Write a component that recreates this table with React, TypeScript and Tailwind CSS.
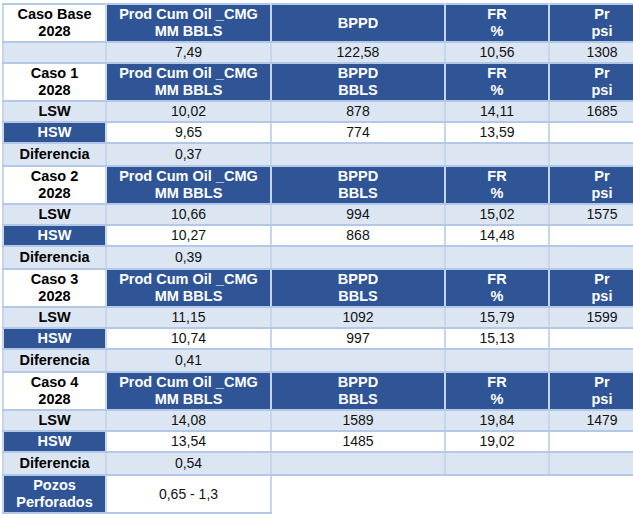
const blue = 'bg-[#2f5597] text-white font-bold'
const light = 'bg-[#dce6f2]'
const cell = 'border-2 border-y-[#b3c8e6] border-x-[#c6d6ec] text-center align-middle p-0 leading-[17px]'

type Caso = {
  name: string
  lsw: string[]
  hsw: string[]
  dif: string
}

const casos: Caso[] = [
  { name: 'Caso 1', lsw: ['10,02', '878', '14,11', '1685'], hsw: ['9,65', '774', '13,59', ''], dif: '0,37' },
  { name: 'Caso 2', lsw: ['10,66', '994', '15,02', '1575'], hsw: ['10,27', '868', '14,48', ''], dif: '0,39' },
  { name: 'Caso 3', lsw: ['11,15', '1092', '15,79', '1599'], hsw: ['10,74', '997', '15,13', ''], dif: '0,41' },
  { name: 'Caso 4', lsw: ['14,08', '1589', '19,84', '1479'], hsw: ['13,54', '1485', '19,02', ''], dif: '0,54' },
]

function HeaderRow({ name, bppd }: { name: string; bppd: string[] }) {
  return (
    <tr className="h-[38px]">
      <td className={`${cell} bg-white font-bold text-black text-[14.5px]`}>
        {name}
        <br />
        2028
      </td>
      <td className={`${cell} ${blue} text-[14.5px]`}>
        Prod Cum Oil _CMG
        <br />
        MM BBLS
      </td>
      <td className={`${cell} ${blue} text-[14.5px]`}>
        {bppd.map((b, i) => (
          <div key={i}>{b}</div>
        ))}
      </td>
      <td className={`${cell} ${blue} text-[14.5px]`}>
        FR
        <br />%
      </td>
      <td className={`${cell} ${blue} text-[14.5px]`}>
        Pr
        <br />
        psi
      </td>
    </tr>
  )
}

export default function App() {
  return (
    <div className="w-[633px] h-[518px] overflow-hidden bg-white pl-[2px] pt-[3px]" style={{ fontFamily: '"Liberation Sans", Arial, sans-serif' }}>
      <table className="border-collapse table-fixed w-[652px] text-[14px] text-[#111]">
        <colgroup>
          <col className="w-[103px]" />
          <col className="w-[165px]" />
          <col className="w-[174px]" />
          <col className="w-[104px]" />
          <col className="w-[106px]" />
        </colgroup>
        <tbody>
          <HeaderRow name="Caso Base" bppd={['BPPD']} />
          <tr className={`h-[21px] ${light}`}>
            <td className={cell}></td>
            <td className={cell}>7,49</td>
            <td className={cell}>122,58</td>
            <td className={cell}>10,56</td>
            <td className={cell}>1308</td>
          </tr>
          {casos.map((c) => (
            <CasoBlock key={c.name} caso={c} />
          ))}
          <tr className="h-[38px]">
            <td className={`${cell} ${blue} text-[14.5px]`}>
              Pozos
              <br />
              Perforados
            </td>
            <td className={`${cell} bg-white`}>0,65 - 1,3</td>
          </tr>
        </tbody>
      </table>
    </div>
  )
}

function CasoBlock({ caso }: { caso: Caso }) {
  return (
    <>
      <HeaderRow name={caso.name} bppd={['BPPD', 'BBLS']} />
      <tr className={`h-[21px] ${light}`}>
        <td className={`${cell} font-bold text-black text-[14.5px]`}>LSW</td>
        {caso.lsw.map((v, i) => (
          <td key={i} className={cell}>{v}</td>
        ))}
      </tr>
      <tr className="h-[21px] bg-white">
        <td className={`${cell} ${blue} text-[14.5px]`}>HSW</td>
        {caso.hsw.map((v, i) => (
          <td key={i} className={cell}>{v}</td>
        ))}
      </tr>
      <tr className={`h-[23px] ${light}`}>
        <td className={`${cell} font-bold text-black text-[14.5px]`}>Diferencia</td>
        <td className={cell}>{caso.dif}</td>
        <td className={cell}></td>
        <td className={cell}></td>
        <td className={cell}></td>
      </tr>
    </>
  )
}
